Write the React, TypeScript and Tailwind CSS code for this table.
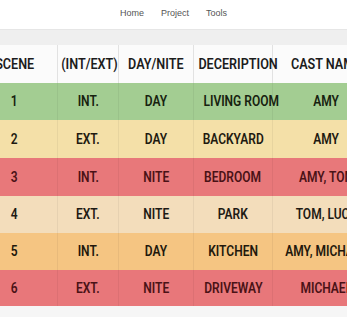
import React from 'react';

type Row = {
  scene: string;
  ie: string;
  dn: string;
  desc: string;
  cast: string;
  bg: string;
  text: string;
  h: string;
};

const rows: Row[] = [
  { scene: '1', ie: 'INT.', dn: 'DAY', desc: 'LIVING ROOM', cast: 'AMY', bg: 'bg-[#a3cd92]', text: 'text-[#17220f]', h: 'h-[37px]' },
  { scene: '2', ie: 'EXT.', dn: 'DAY', desc: 'BACKYARD', cast: 'AMY', bg: 'bg-[#f4e0a8]', text: 'text-[#1e1a10]', h: 'h-[38px]' },
  { scene: '3', ie: 'INT.', dn: 'NITE', desc: 'BEDROOM', cast: 'AMY, TOM', bg: 'bg-[#e8787a]', text: 'text-[#4a1216]', h: 'h-[38px]' },
  { scene: '4', ie: 'EXT.', dn: 'NITE', desc: 'PARK', cast: 'TOM, LUCY', bg: 'bg-[#f3ddbb]', text: 'text-[#1e1a14]', h: 'h-[37px]' },
  { scene: '5', ie: 'INT.', dn: 'DAY', desc: 'KITCHEN', cast: 'AMY, MICHAEL', bg: 'bg-[#f5c582]', text: 'text-[#22180c]', h: 'h-[37px]' },
  { scene: '6', ie: 'EXT.', dn: 'NITE', desc: 'DRIVEWAY', cast: 'MICHAEL', bg: 'bg-[#e8777a]', text: 'text-[#4a1216]', h: 'h-[36px]' },
];

const cols = ['w-[86px]', 'w-[61px]', 'w-[75px]', 'w-[79px]', 'w-[108px]'];

export default function App() {
  return (
    <div className="w-[347px] h-[317px] overflow-hidden bg-[#f6f6f6] font-['Roboto',sans-serif]">
      {/* top nav */}
      <nav className="h-[29px] pb-[2px] bg-white flex items-center justify-center gap-[17px] text-[9px] text-[#555] font-['Liberation_Sans',Arial,sans-serif]">
        <span>Home</span>
        <span>Project</span>
        <span>Tools</span>
      </nav>
      <div className="h-[16px] bg-[#efefef] border-t border-[#e6e6e6]" />

      <table className="-ml-[29px] border-collapse table-fixed w-[409px]">
        <thead>
          <tr className="h-[38px] bg-[#fbfbfb] text-[14px] text-[#1c1c1c]">
            {['SCENE', '(INT/EXT)', 'DAY/NITE', 'DECERIPTION', 'CAST NAME'].map((h, i) => (
              <th key={h} className={`${cols[i]} border-x border-[#e2e2e2] text-center font-semibold whitespace-nowrap px-0`}>
                <span className="inline-block scale-x-[0.9]">{h}</span>
              </th>
            ))}
          </tr>
        </thead>
        <tbody>
          {rows.map((r) => (
            <tr key={r.scene} className={`${r.bg} ${r.text} ${r.h} text-[15px] font-semibold`}>
              {[r.scene, r.ie, r.dn, r.desc, r.cast].map((c, i) => (
                <td key={i} className="border-x border-black/5 text-center whitespace-nowrap px-0">
                  <span className="inline-block scale-x-[0.8]">{c}</span>
                </td>
              ))}
            </tr>
          ))}
        </tbody>
      </table>
    </div>
  );
}
